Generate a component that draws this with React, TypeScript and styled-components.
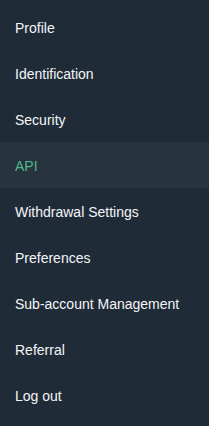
import React from 'react';
import styled, { createGlobalStyle } from 'styled-components';

const GlobalStyle = createGlobalStyle`
  html, body {
    margin: 0;
    padding: 0;
    background: #1f2b37;
  }
`;

const Menu = styled.nav`
  width: 209px;
  min-height: 426px;
  box-sizing: border-box;
  padding: 4px 0 8px;
  background: #1f2b37;
  display: flex;
  flex-direction: column;
`;

const Item = styled.div<{ $active?: boolean }>`
  height: 46px;
  display: flex;
  align-items: center;
  padding: 1px 0 0 15px;
  box-sizing: border-box;
  font-family: 'Liberation Sans', Arial, sans-serif;
  font-size: 14px;
  font-weight: 500;
  color: ${(props) => (props.$active ? '#4fb88d' : '#f4f6f8')};
  background: ${(props) => (props.$active ? '#27343f' : 'transparent')};
  cursor: pointer;
`;

const items = [
  'Profile',
  'Identification',
  'Security',
  'API',
  'Withdrawal Settings',
  'Preferences',
  'Sub-account Management',
  'Referral',
  'Log out',
];

export default function App() {
  return (
    <>
      <GlobalStyle />
      <Menu>
        {items.map((label) => (
          <Item key={label} $active={label === 'API'}>
            {label}
          </Item>
        ))}
      </Menu>
    </>
  );
}
